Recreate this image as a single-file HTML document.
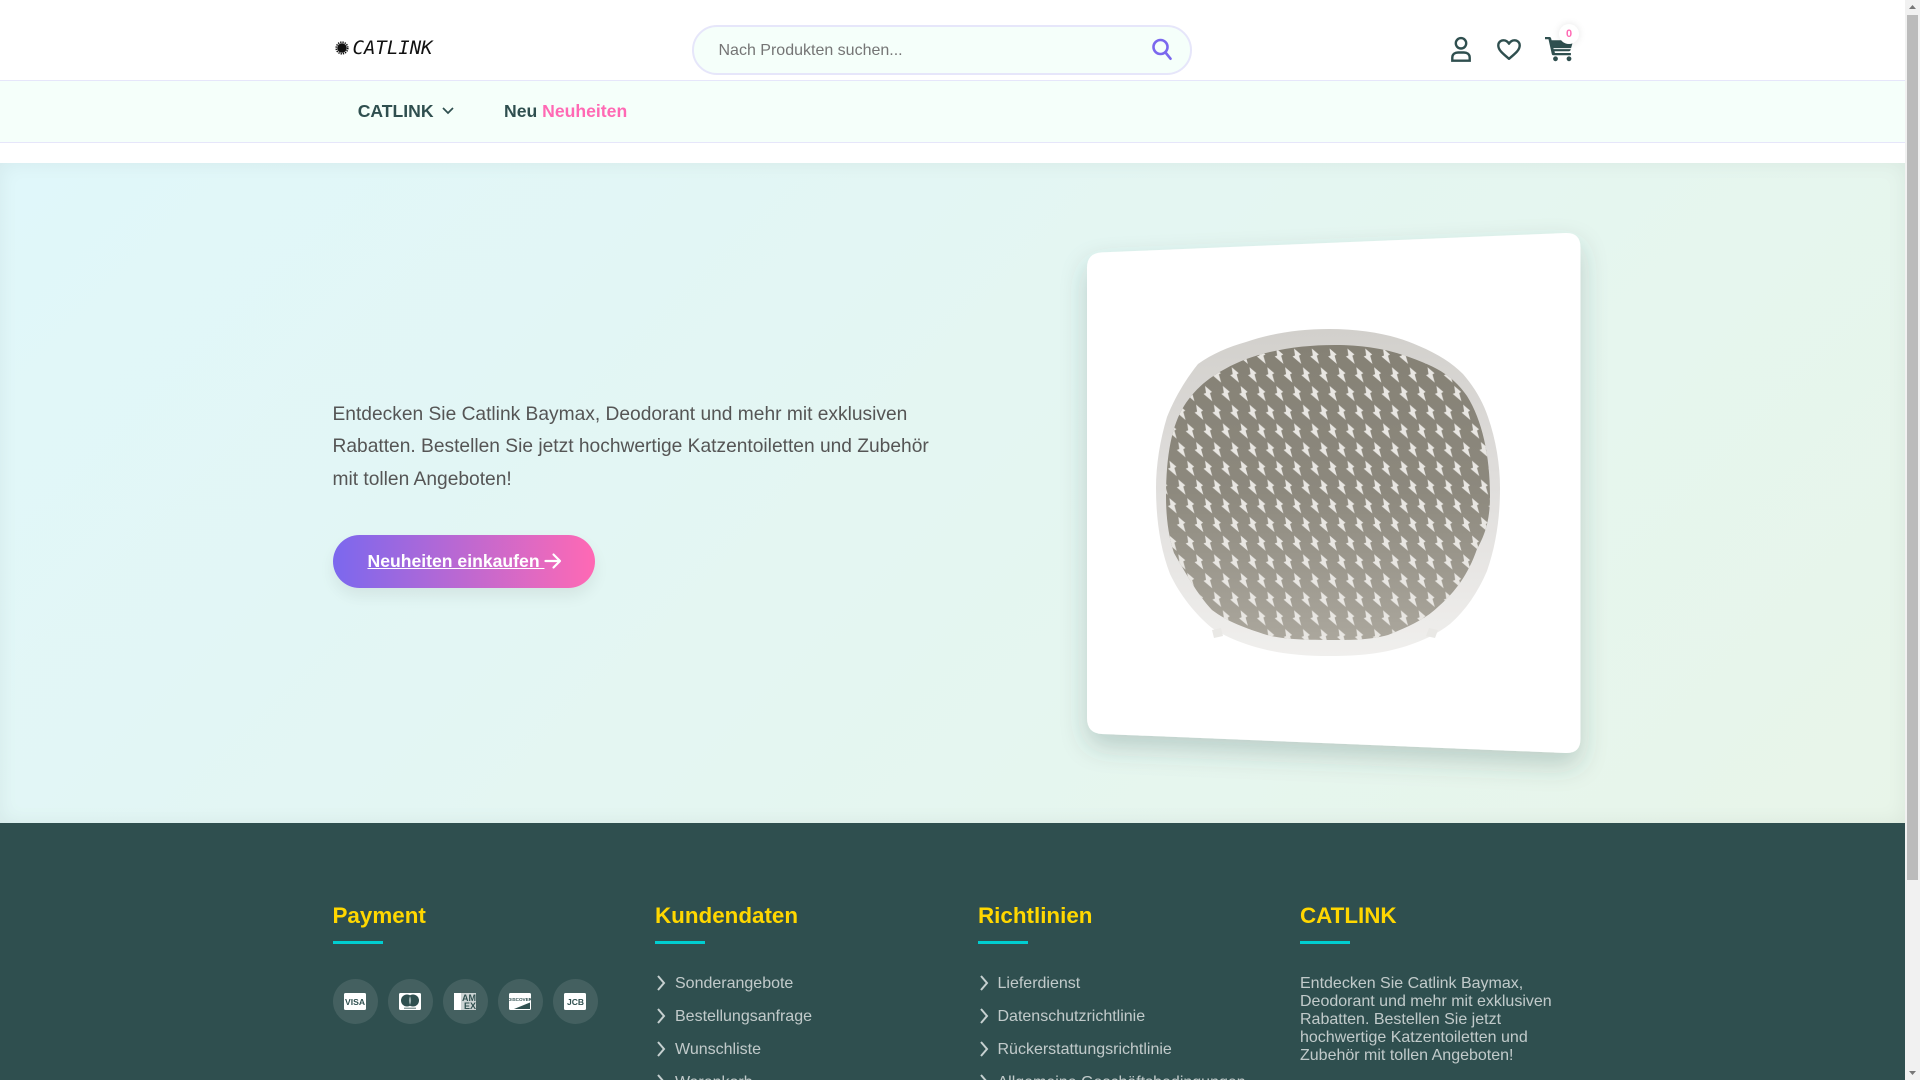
<!DOCTYPE html>
<html lang="de"><head><meta charset="utf-8"><title>CATLINK</title>
<style>
*{box-sizing:border-box;margin:0;padding:0}
html,body{width:1920px;height:1080px;overflow:hidden;background:#fff;font-family:"Liberation Sans",Arial,sans-serif}
.a{position:absolute;white-space:nowrap}
a{color:inherit;text-decoration:none}
#hdr{position:absolute;left:0;top:80px;width:1905px;height:63px;background:#f5fffa;border-top:1px solid #e6e6fa;border-bottom:1px solid #e6e6fa}
#search{position:absolute;left:692px;top:25px;width:500px;height:50px;border:2px solid #e6e6fa;border-radius:25px;background:#f5fffa}
#hero{position:absolute;left:0;top:163px;width:1905px;height:660px;background:linear-gradient(135deg,#e0f7fa,#e8f5e9);box-shadow:inset 0 0 20px rgba(0,0,0,.06)}
#foot{position:absolute;left:0;top:823px;width:1905px;height:257px;background:#2f4f4f;overflow:hidden}
.h{position:absolute;top:80px;font-size:22.400px;line-height:26px;font-weight:700;color:#ffd700;white-space:nowrap}
.u{position:absolute;top:118px;width:50px;height:3px;background:#00ced1}
.l{position:absolute;font-size:16px;line-height:18px;color:rgba(255,255,255,.7);white-space:nowrap}
.c{position:absolute;top:156px;width:45px;height:45px;border-radius:50%;background:rgba(255,255,255,.1)}
.c svg{position:absolute;left:11px;top:14px}
#sb{position:absolute;left:1905px;top:0;width:15px;height:1080px;background:#f1f1f1}
#th{position:absolute;left:2px;top:15px;width:11px;height:865px;background:#bbb}
</style></head><body>

<svg class="a" style="left:334px;top:40px" width="16" height="16" viewBox="0 0 16 16"><circle cx="8" cy="8" r="4.800" fill="#111"/><circle cx="8" cy="8" r="5.800" fill="none" stroke="#111" stroke-width="1.600" stroke-dasharray="1.300 1"/></svg>
<div class="a" style="left:352.500px;top:36px;font:oblique 400 19px/24px 'DejaVu Sans Mono',monospace;color:#111">CATLINK</div>

<div id="search"></div>
<div class="a" style="left:718.500px;top:42px;font-size:16px;line-height:18px;color:#757575">Nach Produkten suchen...</div>
<svg class="a" style="left:1150px;top:36.500px" width="24" height="24" viewBox="0 0 24 24" fill="none" stroke="#7b68ee" stroke-width="2.600" stroke-linecap="round"><circle cx="10.500" cy="10" r="7"/><path d="M15.500 15.500l5 6.200"/></svg>

<svg class="a" style="left:1445px;top:34px" width="32" height="30" viewBox="0 0 32 30" fill="none" stroke="#2f4f4f" stroke-width="2.400"><circle cx="16" cy="9.300" r="5.200"/><path d="M7.300 26.700v-3C7.300 19.800 10.500 18.500 13 18.500h6c2.500 0 5.700 1.300 5.700 5.200v3z"/></svg>
<svg class="a" style="left:1493.500px;top:36px" width="30" height="26" viewBox="0 0 30 26" fill="none" stroke="#2f4f4f" stroke-width="2.400" stroke-linejoin="round"><path d="M15 22.800C8 17 4.300 13.800 4.300 9.500 4.300 6.200 6.800 4.300 9.500 4.300c2.300 0 4.200 1.200 5.500 3.400 1.300-2.200 3.200-3.400 5.500-3.400 2.700 0 5.200 1.900 5.200 5.200 0 4.300-3.700 7.500-10.700 13.300z"/></svg>
<svg class="a" style="left:1542.500px;top:35px" width="32" height="28" viewBox="0 0 32 28"><path fill="#2f4f4f" d="M2 2h4.500c.8 0 1.400.5 1.600 1.200l.5 2h19.900c1 0 1.600 1 1.300 1.900l-2.300 8c-.2.700-.8 1.100-1.500 1.100H11.500l.4 1.800h16v2.300H10.300c-.7 0-1.300-.5-1.500-1.200L5.500 4.300H2z"/><path d="M10.500 13.600h19" stroke="#fff" stroke-width="1"/><circle cx="12.500" cy="23.800" r="2.400" fill="#2f4f4f"/><circle cx="26" cy="23.800" r="2.400" fill="#2f4f4f"/></svg>
<div class="a" style="left:1559px;top:24px;width:20px;height:20px;border-radius:50%;background:#fff;box-shadow:0 0 8px rgba(0,0,0,.1);text-align:center;font-size:11px;font-weight:700;line-height:21px;color:#ff69b4">0</div>

<div id="hdr"></div>
<div class="a" style="left:357.700px;top:101px;font-size:17.600px;line-height:20px;font-weight:700;color:#2f4f4f">CATLINK</div>
<svg class="a" style="left:441px;top:105px" width="14" height="12" viewBox="0 0 14 12" fill="none" stroke="#2f4f4f" stroke-width="1.700"><path d="M2 3l5 5 5-5"/></svg>
<div class="a" style="left:504px;top:101px;font-size:17.600px;line-height:20px;font-weight:700;color:#2f4f4f">Neu <span style="color:#ff69b4">Neuheiten</span></div>

<div id="hero"></div>
<div class="a" style="left:332.500px;top:398.500px;font-size:19.200px;line-height:32.640px;color:#555">Entdecken Sie Catlink Baymax, Deodorant und mehr mit exklusiven<br>Rabatten. Bestellen Sie jetzt hochwertige Katzentoiletten und Zubehör<br>mit tollen Angeboten!</div>
<div class="a" style="left:333px;top:535px;width:262px;height:53px;border-radius:27px;background:linear-gradient(90deg,#7b68ee,#ff69b4);box-shadow:0 8px 16px rgba(0,0,0,.07)"></div>
<div class="a" style="left:367.500px;top:551px;font-size:17.600px;line-height:20px;font-weight:700;color:#fff;text-decoration:underline">Neuheiten einkaufen&nbsp;</div>
<svg class="a" style="left:542.500px;top:551px" width="20" height="20" viewBox="0 0 20 20" fill="none" stroke="#fff" stroke-width="2.200" stroke-linecap="round" stroke-linejoin="round"><path d="M2.500 10h14M10.500 3.500l6.500 6.500-6.500 6.500"/></svg>

<svg class="a" style="left:0;top:0" width="1905" height="1080" viewBox="0 0 1905 1080">
<defs>
<filter id="sh" x="-20%" y="-20%" width="140%" height="140%"><feDropShadow dx="0" dy="12" stdDeviation="13" flood-color="#2f4f4f" flood-opacity=".24"/></filter>
<linearGradient id="g" x1="0" y1="0" x2="0" y2="1"><stop offset="0" stop-color="#85816f"/><stop offset=".02" stop-color="#858175"/><stop offset=".5" stop-color="#8d897e"/><stop offset="1" stop-color="#aca89e"/></linearGradient>
<linearGradient id="r" x1="0" y1="0" x2="0" y2="1"><stop offset="0" stop-color="#d2d0cc"/><stop offset=".45" stop-color="#dfdddb"/><stop offset="1" stop-color="#f0efed"/></linearGradient>
<pattern id="b" width="17.800" height="37.400" patternUnits="userSpaceOnUse" x="1200" y="347">
<path fill="#e8e6e2" d="M5 1.500L12 7.500 10 8.700 12.300 17 3.500 9.500 6 8.500z"/>
<path fill="#e8e6e2" d="M-3.900 20.200L3.100 26.200 1.100 27.400 3.400 35.700-5.400 28.200-2.900 27.200z"/>
<path fill="#e8e6e2" d="M13.900 20.200L20.900 26.200 18.900 27.400 21.200 35.700 12.400 28.200 14.900 27.200z"/>
</pattern>
<clipPath id="ci"><path d="M1335 345C1375 345 1400 353 1422 362 1445 371 1457 382 1467 396 1482 420 1490 455 1490 496 1490 520 1485 535 1477 549 1468 575 1455 592 1439 606 1425 620 1405 628 1388 635 1370 640 1350 640 1335 640 1315 640 1285 640 1267 635 1245 628 1228 622 1212 610 1197 594 1185 572 1174 553 1168 535 1166 515 1166 496 1166 455 1172 425 1184 406 1194 390 1208 378 1225 369 1255 352 1295 345 1335 345Z"/></clipPath>
</defs>
<path filter="url(#sh)" fill="#fff" d="M1102 252.400L1565.500 233Q1580.500 232.400 1580.500 247.500L1580.500 738.500Q1580.500 753.700 1565.500 753L1102 734Q1087 733.300 1087 718L1087 268Q1087 253 1102 252.400Z"/>
<path fill="url(#r)" d="M1329 329C1365 329 1395 335 1419 346 1438 354 1452 363 1463 374 1475 388 1483 402 1488 417 1496 440 1500 465 1500 488 1500 518 1496 545 1487 571 1478 592 1466 610 1450 624 1432 638 1410 646 1388 651 1368 655 1350 656 1329 656 1305 656 1283 654 1263 649 1243 644 1226 637 1212 628 1195 614 1180 595 1170 574 1160 548 1156 518 1156 488 1156 465 1160 440 1167 417 1175 397 1186 379 1198 364 1212 354 1228 347 1246 342 1272 333 1300 329 1329 329Z"/>
<g clip-path="url(#ci)"><rect x="1150" y="340" width="350" height="305" fill="url(#g)"/><rect x="1150" y="340" width="350" height="305" fill="url(#b)"/></g>
<path fill="#e9e8e5" d="M1212 630l9-2 2 8-9 2zM1429 628l9 2-3 8-9-2z"/>
</svg>

<div id="foot">
<div class="h" style="left:332.500px">Payment</div><div class="u" style="left:333px"></div>
<div class="h" style="left:655px">Kundendaten</div><div class="u" style="left:655px"></div>
<div class="h" style="left:978px">Richtlinien</div><div class="u" style="left:978px"></div>
<div class="h" style="left:1300px">CATLINK</div><div class="u" style="left:1300px"></div>

<div class="c" style="left:333px"><svg width="22" height="17" viewBox="0 0 22 17"><rect width="22" height="17" rx="1.500" fill="#fff"/><text x="11" y="12" text-anchor="middle" font-family="Liberation Sans" font-weight="700" font-size="8.600" fill="#2f4f4f">VISA</text></svg></div>
<div class="c" style="left:388px"><svg width="22" height="17" viewBox="0 0 22 17"><rect width="22" height="17" rx="1.500" fill="#fff"/><circle cx="8" cy="7.500" r="6" fill="#2f4f4f"/><circle cx="14" cy="7.500" r="6" fill="#2f4f4f"/><path d="M11 3c1.400 3 1.400 6 0 9-1.400-3-1.400-6 0-9z" fill="#9db0b0"/><path d="M5 15.200h12" stroke="#5a7474" stroke-width="1"/></svg></div>
<div class="c" style="left:443px"><svg width="22" height="17" viewBox="0 0 22 17"><rect width="22" height="17" fill="#fff"/><path d="M7 0h15v17H7z" fill="#2f4f4f" opacity=".25"/><text x="22" y="8" text-anchor="end" font-family="Liberation Sans" font-weight="700" font-size="9" fill="#2f4f4f">AM</text><text x="22" y="16" text-anchor="end" font-family="Liberation Sans" font-weight="700" font-size="9" fill="#2f4f4f">EX</text></svg></div>
<div class="c" style="left:498px"><svg width="22" height="17" viewBox="0 0 22 17"><rect width="22" height="17" rx="1.500" fill="#fff"/><text x="11" y="8" text-anchor="middle" font-family="Liberation Sans" font-weight="700" font-size="4.600" fill="#2f4f4f">DISCOVER</text><path d="M5 16L21 9.500V16z" fill="#2f4f4f"/></svg></div>
<div class="c" style="left:553px"><svg width="22" height="17" viewBox="0 0 22 17"><rect width="22" height="17" rx="1.500" fill="#fff"/><text x="11.500" y="11.800" text-anchor="middle" font-family="Liberation Sans" font-weight="700" font-size="8.500" fill="#2f4f4f">JCB</text></svg></div>

<svg class="a" style="left:655px;top:151px" width="12" height="120" viewBox="0 0 12 120" fill="none" stroke="#c6d0d0" stroke-width="2"><path d="M3 2l6 7-6 7M3 35l6 7-6 7M3 68l6 7-6 7M3 101l6 7-6 7"/></svg>
<div class="l" style="left:675px;top:152px">Sonderangebote</div>
<div class="l" style="left:675px;top:185px">Bestellungsanfrage</div>
<div class="l" style="left:675px;top:218px">Wunschliste</div>
<div class="l" style="left:675px;top:251px">Warenkorb</div>

<svg class="a" style="left:978px;top:151px" width="12" height="120" viewBox="0 0 12 120" fill="none" stroke="#c6d0d0" stroke-width="2"><path d="M3 2l6 7-6 7M3 35l6 7-6 7M3 68l6 7-6 7M3 101l6 7-6 7"/></svg>
<div class="l" style="left:997.500px;top:152px">Lieferdienst</div>
<div class="l" style="left:997.500px;top:185px">Datenschutzrichtlinie</div>
<div class="l" style="left:997.500px;top:218px">Rückerstattungsrichtlinie</div>
<div class="l" style="left:997.500px;top:251px">Allgemeine Geschäftsbedingungen</div>

<div class="l" style="left:1300px;top:152px">Entdecken Sie Catlink Baymax,<br>Deodorant und mehr mit exklusiven<br>Rabatten. Bestellen Sie jetzt<br>hochwertige Katzentoiletten und<br>Zubehör mit tollen Angeboten!</div>
</div>

<div id="sb"><div id="th"></div>
<svg class="a" style="left:0;top:0" width="15" height="1080" viewBox="0 0 15 1080" fill="#777"><path d="M4 9l3.500-4 3.500 4zM4 1071l3.500 4 3.500-4z"/></svg>
</div>
</body></html>
